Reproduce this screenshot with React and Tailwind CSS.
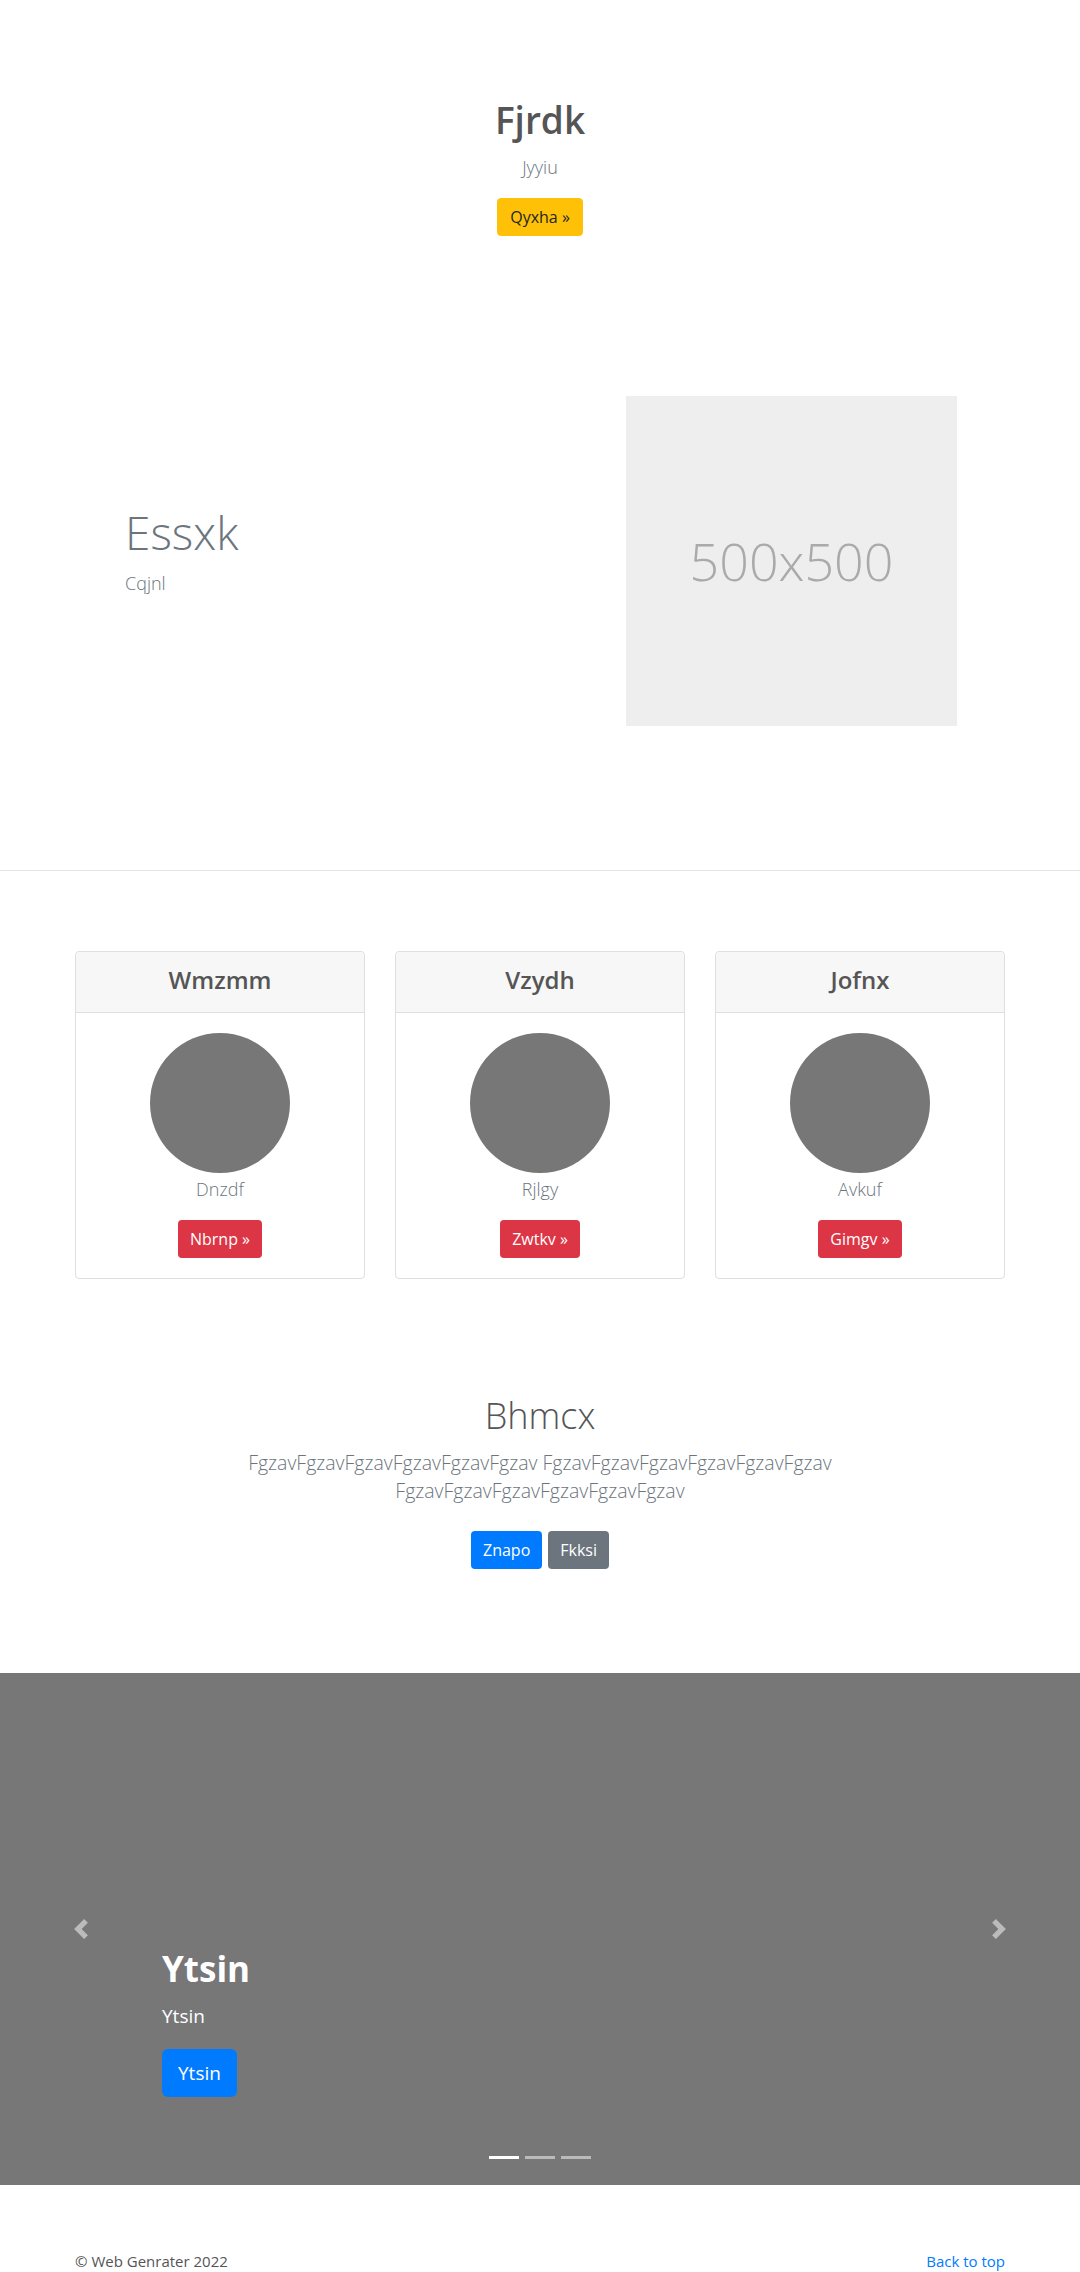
import React from 'react';

const cards = [
  { title: 'Wmzmm', text: 'Dnzdf', action: 'Nbrnp' },
  { title: 'Vzydh', text: 'Rjlgy', action: 'Zwtkv' },
  { title: 'Jofnx', text: 'Avkuf', action: 'Gimgv' },
];

const word = 'FgzavFgzavFgzavFgzavFgzavFgzav';

function Chevron({ dir }) {
  const d =
    dir === 'prev'
      ? 'M5.25 0l-4 4 4 4 1.5-1.5L4.25 4l2.5-2.5L5.25 0z'
      : 'M2.75 0l-1.5 1.5L3.75 4l-2.5 2.5L2.75 8l4-4-4-4z';
  return (
    <svg width="20" height="20" viewBox="0 0 8 8" fill="#fff">
      <path d={d} />
    </svg>
  );
}

export default function App() {
  return (
    <div className="min-h-screen bg-white font-['Open_Sans',sans-serif]">
      {/* hero */}
      <section className="pt-[96px] flex flex-col items-center text-center">
        <h1 className="text-[37px] leading-[48px] font-semibold text-[#555] mb-[10px]">Fjrdk</h1>
        <p className="text-[18px] leading-[27px] font-light text-[#6c757d] mb-[17px]">Jyyiu</p>
        <a className="h-[38px] px-3 flex items-center border border-[#ffc107] bg-[#ffc107] text-[#212529] text-base rounded">
          Qyxha »
        </a>
      </section>

      {/* feature */}
      <section className="pt-[160px] pb-[144px]">
        <div className="mx-auto w-[960px] grid grid-cols-2">
          <div className="flex flex-col justify-center pl-[65px] mb-5">
            <h2 className="text-[46px] leading-[55px] font-light text-[#6c757d] mb-[10px]">Essxk</h2>
            <p className="text-[18px] leading-[27px] font-light text-[#6c757d]">Cqjnl</p>
          </div>
          <div className="pl-[86px]">
            <div className="w-[331px] h-[330px] bg-[#eee] flex items-center justify-center text-[52px] font-light text-[#aaa]">
              500x500
            </div>
          </div>
        </div>
      </section>

      <hr className="border-[#e5e5e5]" />

      {/* cards */}
      <section className="pt-[80px]">
        <div className="mx-auto w-[930px] grid grid-cols-3 gap-[30px]">
          {cards.map((c) => (
            <div key={c.title} className="border border-[#dfdfdf] rounded">
              <div className="h-[61px] bg-[#f7f7f7] border-b border-[#dfdfdf] rounded-t flex items-center justify-center pb-[5px]">
                <h4 className="text-[24px] leading-[29px] font-semibold text-[#555]">{c.title}</h4>
              </div>
              <div className="pt-5 pb-5 flex flex-col items-center">
                <div className="w-[140px] h-[140px] rounded-full bg-[#777]" />
                <p className="mt-[3px] text-[18px] leading-[27px] font-light text-[#6c757d]">{c.text}</p>
                <a className="mt-[17px] h-[38px] px-3 flex items-center bg-[#dc3545] text-white text-base rounded">
                  {c.action} »
                </a>
              </div>
            </div>
          ))}
        </div>
      </section>

      {/* intro */}
      <section className="pt-[113px] flex flex-col items-center text-center">
        <h2 className="text-[36px] leading-[48px] font-light text-[#555]">Bhmcx</h2>
        <p className="mt-[9px] w-[620px] text-[19.5px] leading-[28px] font-light text-[#6c757d]">
          {word} {word} {word}
        </p>
        <div className="mt-[26px] flex gap-[6px]">
          <a className="h-[38px] px-3 flex items-center bg-[#007bff] text-white text-base rounded">Znapo</a>
          <a className="h-[38px] px-3 flex items-center bg-[#6c757d] text-white text-base rounded">Fkksi</a>
        </div>
      </section>

      {/* carousel */}
      <section className="mt-[104px] relative h-[512px] bg-[#777] overflow-hidden">
        <a className="absolute left-0 inset-y-0 w-[15%] flex items-center justify-center opacity-50">
          <Chevron dir="prev" />
        </a>
        <a className="absolute right-0 inset-y-0 w-[15%] flex items-center justify-center opacity-50">
          <Chevron dir="next" />
        </a>
        <div className="absolute left-[15%] right-[15%] bottom-[88px] flex flex-col items-start text-white">
          <h1 className="text-[35px] leading-[46px] font-bold mb-[10px]">Ytsin</h1>
          <p className="text-[19px] leading-[28px] mb-[19px]">Ytsin</p>
          <a className="h-[48px] px-4 flex items-center bg-[#007bff] text-white text-[19px] rounded-md">Ytsin</a>
        </div>
        <div className="absolute bottom-[26px] inset-x-0 flex justify-center gap-[6px]">
          <span className="w-[30px] h-[3px] bg-white" />
          <span className="w-[30px] h-[3px] bg-white/50" />
          <span className="w-[30px] h-[3px] bg-white/50" />
        </div>
      </section>

      {/* footer */}
      <footer className="pt-[64px] pb-12">
        <div className="mx-auto w-[930px] flex justify-between leading-[24px]">
          <p className="text-[15px] text-[#555]">© Web Genrater 2022</p>
          <a className="text-[15px] text-[#007bff]">Back to top</a>
        </div>
      </footer>
    </div>
  );
}
